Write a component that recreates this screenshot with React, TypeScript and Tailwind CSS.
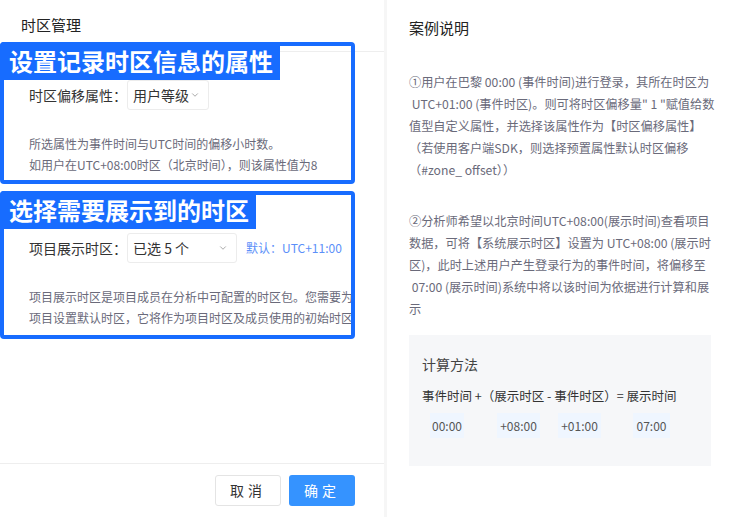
import { ChevronDown } from "lucide-react";

const FONT = { fontFamily: '"Noto Sans CJK SC", "Noto Sans", sans-serif' };

function Select({ value, width }: { value: string; width: string }) {
  return (
    <div
      className={`flex h-[30px] items-center justify-between rounded-[3px] border border-[#ececec] bg-white pl-[5px] pr-[8px] text-[14px] text-[#333] ${width}`}
    >
      <span>{value}</span>
      <ChevronDown size={10} strokeWidth={2} className="text-[#999]" />
    </div>
  );
}

function Callout({ label, labelWidth, className }: { label: string; labelWidth: string; className: string }) {
  return (
    <div className={`pointer-events-none absolute rounded-[4px] border-[4px] border-[#176cff] ${className}`}>
      <div
        className={`-ml-[4px] -mt-[4px] flex h-[38px] items-center rounded-tl-[4px] bg-[#176cff] pl-[9px] text-[24px] font-bold leading-none text-white ${labelWidth}`}
      >
        {label}
      </div>
    </div>
  );
}

export default function App() {
  return (
    <div className="relative flex h-[517px] w-[732px] overflow-hidden bg-white" style={FONT}>
      {/* left: settings form */}
      <div className="flex w-[384px] shrink-0 flex-col">
        <div className="flex h-[52px] items-center border-b border-[#eeeeee] pl-[21px] text-[15px] text-[#222]">
          时区管理
        </div>
        <div className="flex-1 overflow-hidden pl-[29px] pt-[28px]">
          <div className="flex items-center">
            <span className="w-[98px] text-[14px] text-[#333]">时区偏移属性：</span>
            <Select value="用户等级" width="w-[82px]" />
          </div>
          <div className="mt-[23px] text-[12px] leading-[21px] text-[#6a6a7a]">
            <div>所选属性为事件时间与UTC时间的偏移小时数。</div>
            <div>如用户在UTC+08:00时区（北京时间），则该属性值为8</div>
          </div>
          <div className="mt-[58px] flex items-center">
            <span className="w-[98px] text-[14px] text-[#333]">项目展示时区：</span>
            <Select value="已选 5 个" width="w-[110px]" />
            <span className="ml-[9px] text-[12px] text-[#5b8ff9]">默认：UTC+11:00</span>
          </div>
          <div className="mt-[23px] w-[322px] overflow-hidden whitespace-nowrap text-[12px] leading-[21px] text-[#6a6a7a]">
            <div>项目展示时区是项目成员在分析中可配置的时区包。您需要为</div>
            <div>项目设置默认时区，它将作为项目时区及成员使用的初始时区</div>
          </div>
        </div>
        <div className="flex h-[54px] items-center justify-end gap-[8px] border-t border-[#eeeeee] pr-[29px]">
          <button className="h-[31px] w-[66px] rounded-[3px] border border-[#e4e4e4] bg-white text-[14px] tracking-[4px] text-[#333]">
            取消
          </button>
          <button className="h-[31px] w-[66px] rounded-[3px] bg-[#3593ff] text-[14px] tracking-[4px] text-white">
            确定
          </button>
        </div>
      </div>

      {/* right: example */}
      <div className="flex w-[348px] shrink-0 flex-col overflow-hidden border-l-[3px] border-[#f6f6f6] pl-[22px]">
        <div className="flex h-[56px] items-center text-[15px] text-[#222]">案例说明</div>
        <div className="mt-[15px] w-[303px] whitespace-nowrap text-[12.2px] leading-[22px] text-[#6a6a7a]">
          <div>①用户在巴黎 00:00 (事件时间)进行登录，其所在时区为</div>
          <div>&nbsp;UTC+01:00 (事件时区)。则可将时区偏移量" 1 "赋值给数</div>
          <div>值型自定义属性，并选择该属性作为【时区偏移属性】</div>
          <div>（若使用客户端SDK，则选择预置属性默认时区偏移</div>
          <div>（#zone_ offset））</div>
        </div>
        <div className="mt-[29px] w-[303px] whitespace-nowrap text-[12.2px] leading-[22px] text-[#6a6a7a]">
          <div>②分析师希望以北京时间UTC+08:00(展示时间)查看项目</div>
          <div>数据，可将【系统展示时区】设置为 UTC+08:00 (展示时</div>
          <div>区)，此时上述用户产生登录行为的事件时间，将偏移至</div>
          <div>&nbsp;07:00 (展示时间)系统中将以该时间为依据进行计算和展</div>
          <div>示</div>
        </div>
        <div className="mt-[15px] h-[131px] w-[302px] bg-[#f6f7f9] px-[13px] pt-[19px]">
          <div className="text-[14px] leading-[20px] text-[#444]">计算方法</div>
          <div className="mt-[12px] whitespace-nowrap text-[12.5px] leading-[20px] text-[#333]">
            事件时间 +（展示时区 - 事件时区）= 展示时间
          </div>
          <div className="mt-[7px] flex pl-[8px] text-[12px] text-[#555]">
            <span className="flex h-[25px] w-[34px] items-center justify-center bg-[#eff6ff]">00:00</span>
            <span className="ml-[33px] flex h-[25px] w-[43px] items-center justify-center bg-[#eff6ff]">+08:00</span>
            <span className="ml-[18px] flex h-[25px] w-[43px] items-center justify-center bg-[#eff6ff]">+01:00</span>
            <span className="ml-[32px] flex h-[25px] w-[37px] items-center justify-center bg-[#eff6ff]">07:00</span>
          </div>
        </div>
      </div>

      {/* annotation overlays */}
      <Callout label="设置记录时区信息的属性" labelWidth="w-[280px]" className="left-0 top-[42px] h-[142px] w-[355px]" />
      <Callout label="选择需要展示到的时区" labelWidth="w-[256px]" className="left-0 top-[191px] h-[148px] w-[355px]" />
    </div>
  );
}
